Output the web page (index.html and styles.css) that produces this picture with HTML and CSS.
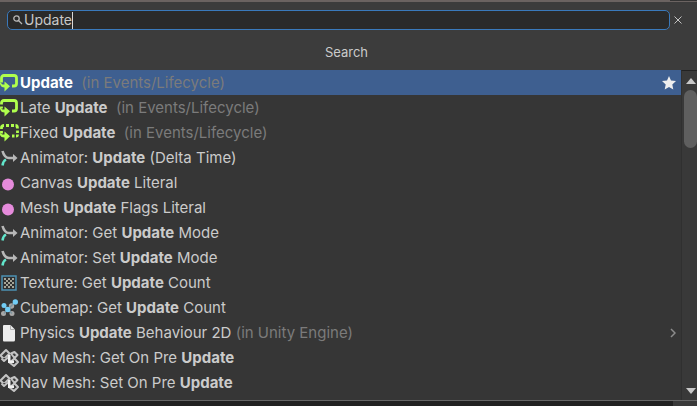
FILE: index.html
```html
<!DOCTYPE html>
<html lang="en">
<head>
  <meta charset="UTF-8" />
  <meta name="viewport" content="width=device-width, initial-scale=1.0" />
  <title>Search</title>
  <link rel="stylesheet" href="styles.css">
</head>
<body>
  <svg class="defs" aria-hidden="true">
    <symbol id="event" viewBox="0 0 20 20">
      <path d="M1.500 9.500V5Q1.500 2.500 4 2.500H14Q16.500 2.500 16.500 5V10.500Q16.500 13 14 13H12" fill="none" stroke="#b0ff4d" stroke-width="2.800"/>
      <path d="M0 9L2.500 11.500H4.500V8.500L10 13.200L4.500 18.500V14.500Q1 14.500 0 11Z" fill="#b0ff4d"/>
    </symbol>
    <symbol id="event-late" viewBox="0 0 20 20">
      <path d="M1.500 10.500V8.500M1.500 6.500V5Q1.500 2.500 4 2.500H14Q16.500 2.500 16.500 5V10.500Q16.500 13 14 13H12" fill="none" stroke="#b0ff4d" stroke-width="2.800"/>
      <path d="M0 9L2.500 11.500H4.500V8.500L10 13.200L4.500 18.500V14.500Q1 14.500 0 11Z" fill="#b0ff4d"/>
    </symbol>
    <symbol id="event-fixed" viewBox="0 0 20 20">
      <path d="M1.500 6V4.500Q1.500 2.500 4 2.500M6 2.500H9M11 2.500H14M15.500 2.500Q17.500 2.500 17.500 5.500M17.500 7.500V10M17.500 11.500Q17.500 13 16 13M14.500 13H12M1.500 8V10.500" fill="none" stroke="#b0ff4d" stroke-width="2.800"/>
      <path d="M0 10L2.500 11.500H4.500V8.500L10 13.200L4.500 18.500V14.500Q1 14.500 0 12Z" fill="#b0ff4d"/>
    </symbol>
    <symbol id="animator" viewBox="0 0 20 20">
      <path d="M2.500 17.500Q3 13 6 11.500" fill="none" stroke="#62e6cc" stroke-width="2.500"/>
      <path d="M2.500 3Q4.500 10 9 10H14" fill="none" stroke="#b8b8b8" stroke-width="2.600"/>
      <path d="M13 6L17.500 10L13 14Z" fill="#b8b8b8"/>
    </symbol>
    <symbol id="literal" viewBox="0 0 20 20">
      <circle cx="8" cy="11.500" r="6" fill="#e58bdb"/>
    </symbol>
    <symbol id="texture" viewBox="0 0 20 20">
      <rect x="2" y="3" width="14" height="14" fill="#303030" stroke="#4c91b3" stroke-width="1.500"/>
      <path d="M4 5h2v2h-2zM8 5h2v2h-2zM12 5h2v2h-2zM6 7h2v2h-2zM10 7h2v2h-2zM4 9h2v2h-2zM8 9h2v2h-2zM12 9h2v2h-2zM6 11h2v2h-2zM10 11h2v2h-2zM4 13h2v2h-2zM8 13h2v2h-2zM12 13h2v2h-2z" fill="#a5a598"/>
    </symbol>
    <symbol id="cubemap" viewBox="0 0 20 20">
      <g fill="#a8a8a8"><circle cx="3.500" cy="15.500" r="2.500"/><circle cx="12" cy="15.500" r="2.500"/><circle cx="11.500" cy="8" r="2.700"/></g>
      <path d="M4 7.500L12 15.500M4 15.500L15 4" stroke="#7d95a0" stroke-width="1.500"/>
      <g fill="#72ccf5"><circle cx="4" cy="7.500" r="2.500"/><circle cx="7.800" cy="11.500" r="2.700"/><circle cx="15.300" cy="4" r="2.700"/></g>
    </symbol>
    <symbol id="script" viewBox="0 0 20 20">
      <path d="M4 2H10.500L15 6.500V17Q15 18.500 13.500 18.500H4Q3 18.500 3 17.500V3Q3 2 4 2Z" fill="#ececec"/>
      <path d="M10.500 2V6.500H15" fill="none" stroke="#b0b0b0"/>
    </symbol>
    <symbol id="navmesh" viewBox="0 0 20 20">
      <g fill="#3d3d3d" stroke="#c4c4c4" stroke-width="2" stroke-linejoin="round">
        <path d="M0.500 7.500L6 2L9.500 5.500L4 11Z"/>
        <path d="M11 5.500L14.500 4L17.500 7L14.500 10Z"/>
        <path d="M1.500 10.500L4 13L8 9.500"/>
        <path d="M9.500 14.500L14.500 10.500L18 14L14 18Z"/>
      </g>
      <path d="M8 7H10.500V12.500H14V15H8Z" fill="#f0f0f0"/>
    </symbol>
  </svg>

  <div class="backdrop-top"><span></span></div>
  <main class="finder">
    <header>
      <form class="search-row">
        <label class="search-box">
          <svg class="magnifier" viewBox="0 0 10 10" aria-hidden="true"><circle cx="3.500" cy="3.500" r="2.700"/><path d="M5.500 5.500L9 9"/></svg>
          <input type="text" value="Update" aria-label="Search"><span class="caret"></span>
        </label>
        <button class="close" type="button" aria-label="Close"><svg viewBox="0 0 8 8"><path d="M0.500 0.500L7.500 7.500M7.500 0.500L0.500 7.500"/></svg></button>
      </form>
      <h1>Search</h1>
    </header>

    <div class="results">
      <ul>
        <li><button class="item selected"><svg class="icon"><use href="#event"/></svg><span><b>Update</b>&nbsp; <i>(in Events/Lifecycle)</i></span><svg class="star" viewBox="0 0 14 14"><path d="M7 0L9 4.600L14 5.100L10.300 8.400L11.300 13.500L7 10.900L2.700 13.500L3.700 8.400L0 5.100L5 4.600Z"/></svg></button></li>
        <li><button class="item"><svg class="icon"><use href="#event-late"/></svg><span>Late <b>Update</b>&nbsp; <i>(in Events/Lifecycle)</i></span></button></li>
        <li><button class="item"><svg class="icon"><use href="#event-fixed"/></svg><span>Fixed <b>Update</b>&nbsp; <i>(in Events/Lifecycle)</i></span></button></li>
        <li><button class="item"><svg class="icon"><use href="#animator"/></svg><span>Animator: <b>Update</b> (Delta Time)</span></button></li>
        <li><button class="item"><svg class="icon"><use href="#literal"/></svg><span>Canvas <b>Update</b> Literal</span></button></li>
        <li><button class="item"><svg class="icon"><use href="#literal"/></svg><span>Mesh <b>Update</b> Flags Literal</span></button></li>
        <li><button class="item"><svg class="icon"><use href="#animator"/></svg><span>Animator: Get <b>Update</b> Mode</span></button></li>
        <li><button class="item"><svg class="icon"><use href="#animator"/></svg><span>Animator: Set <b>Update</b> Mode</span></button></li>
        <li><button class="item"><svg class="icon"><use href="#texture"/></svg><span>Texture: Get <b>Update</b> Count</span></button></li>
        <li><button class="item"><svg class="icon"><use href="#cubemap"/></svg><span>Cubemap: Get <b>Update</b> Count</span></button></li>
        <li><button class="item"><svg class="icon"><use href="#script"/></svg><span>Physics <b>Update</b> Behaviour 2D <i>(in Unity Engine)</i></span><svg class="chevron" viewBox="0 0 6 10"><path d="M1 1L5 5L1 9"/></svg></button></li>
        <li><button class="item"><svg class="icon"><use href="#navmesh"/></svg><span>Nav Mesh: Get On Pre <b>Update</b></span></button></li>
        <li><button class="item"><svg class="icon"><use href="#navmesh"/></svg><span>Nav Mesh: Set On Pre <b>Update</b></span></button></li>
      </ul>
      <div class="scrollbar">
        <button aria-label="Scroll up"><svg viewBox="0 0 10 6"><path d="M5 0L10 6H0Z"/></svg></button>
        <div class="track"><div class="thumb"></div></div>
        <button aria-label="Scroll down"><svg viewBox="0 0 10 6"><path d="M0 0H10L5 6Z"/></svg></button>
      </div>
    </div>
  </main>
  <div class="backdrop-bottom"><span></span></div>
</body>
</html>
```

FILE: styles.css
```css
:root {
  --header: #3c3c3c;
  --list: #363636;
  --text: #cbcbcb;
  --muted: #7b7b7b;
  --selected: #3e5f90;
  --focus: #3a79bb;
}
* {
  box-sizing: border-box;
}
body {
  margin: 0;
  min-height: 100vh;
  display: flex;
  flex-direction: column;
  background: var(--list);
  color: var(--text);
  font: 15px/24px Inter, sans-serif;
}
button, input {
  margin: 0;
  padding: 0;
  border: none;
  background: none;
  color: inherit;
  font: inherit;
}
svg {
  display: block;
  flex: none;
}
.defs {
  position: absolute;
  width: 0;
  height: 0;
}
.backdrop-top {
  height: 2px;
  background: #6b6361;
}
.backdrop-top span {
  display: block;
  width: 27px;
  height: 1px;
  margin-left: auto;
  background: #333;
}
.finder {
  flex: 1;
  display: flex;
  flex-direction: column;
}
header {
  padding-top: 8px;
  height: 68px;
  background: var(--header);
}
.search-row {
  display: flex;
  align-items: center;
  padding-left: 7px;
}
.search-box {
  flex: 1;
  display: flex;
  align-items: center;
  height: 20px;
  padding-left: 5px;
  border: 1px solid var(--focus);
  border-radius: 5px;
  background: #2a2a2a;
}
.search-box input {
  field-sizing: content;
  height: 18px;
  margin-left: 1px;
  outline: none;
  font-size: 14px;
  color: #c8c8c8;
}
.magnifier {
  width: 10px;
  height: 10px;
  fill: none;
  stroke: #b8b8b8;
  stroke-width: 1.3;
}
.caret {
  width: 1px;
  height: 17px;
  background: #d8d8d8;
}
.close {
  width: 27px;
  height: 20px;
  padding-left: 4px;
}
.close svg {
  width: 8px;
  height: 8px;
  stroke: #c4c4c4;
  fill: none;
}
h1 {
  margin: 10px 0 0;
  padding-right: 4px;
  text-align: center;
  font-size: 13px;
  font-weight: 400;
}
.results {
  flex: 1;
  display: flex;
}
ul {
  flex: 1;
  margin: 0;
  padding: 0;
  list-style: none;
}
.item {
  display: flex;
  align-items: center;
  width: 100%;
  height: 25px;
  padding-right: 5px;
  text-align: left;
  white-space: pre;
}
.item.selected {
  background: var(--selected);
}
.item span {
  flex: 1;
}
.item b {
  font-weight: 700;
}
.item.selected b {
  color: #fff;
}
.item i {
  font-style: normal;
  color: var(--muted);
}
.icon {
  width: 20px;
  height: 20px;
}
.star {
  width: 14px;
  height: 14px;
  fill: #eee;
}
.chevron {
  width: 6px;
  height: 10px;
  fill: none;
  stroke: #8c8c8c;
  stroke-width: 1.5;
}
.scrollbar {
  display: flex;
  flex-direction: column;
  width: 16px;
  padding-left: 2px;
  border-left: 1px solid #303030;
  border-top: 1px solid #222;
  background: #393939;
}
.scrollbar button {
  display: grid;
  place-items: center;
  height: 19px;
}
.scrollbar svg {
  width: 10px;
  height: 6px;
  fill: #c8c8c8;
}
.track {
  flex: 1;
}
.thumb {
  height: 58px;
  border-radius: 7px;
  background: #5f5f5f;
}
.backdrop-bottom {
  height: 6px;
  border-top: 1px solid #666;
  background: #212121;
}
.backdrop-bottom span {
  display: block;
  width: 24px;
  height: 5px;
  margin-left: auto;
  background: #393939;
}
```
